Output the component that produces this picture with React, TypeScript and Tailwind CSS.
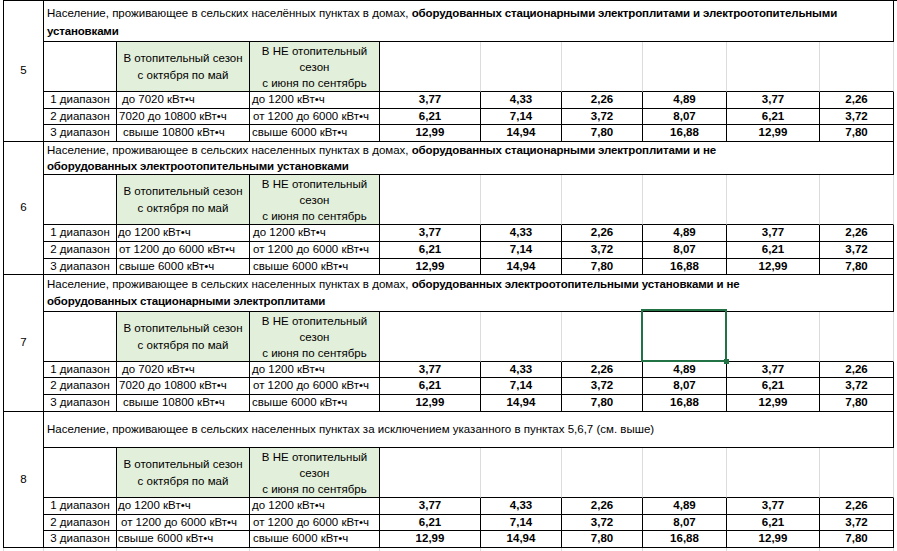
import type { ReactNode } from "react";

// Excel-like tariff sheet fragment (sections 5–8)

const COLS =
  "grid grid-cols-[40px_73px_133px_130px_101px_81px_81px_84px_93px_74px]";

const VALUES = [
  ["3,77", "4,33", "2,26", "4,89", "3,77", "2,26"],
  ["6,21", "7,14", "3,72", "8,07", "6,21", "3,72"],
  ["12,99", "14,94", "7,80", "16,88", "12,99", "7,80"],
];

const RANGES = ["1 диапазон", "2 диапазон", "3 диапазон"];

type Cell = { text: string; pad: string };

type SectionData = {
  num: string;
  titleH: string;
  title: ReactNode;
  rowHs: string[];
  c: Cell[];
  d: Cell[];
  selected?: boolean;
};

const SECTIONS: SectionData[] = [
  {
    num: "5",
    titleH: "h-[41px] pt-[2px] leading-[18px]",
    title: (
      <>
        Население, проживающее в сельских населённых пунктах в домах,{" "}
        <b className="tracking-[-0.15px]">
          оборудованных стационарными электроплитами и электроотопительными
          установками
        </b>
      </>
    ),
    rowHs: ["h-[17px]", "h-[16px]", "h-[17px]"],
    c: [
      { text: "до 7020 кВт•ч", pad: "pl-[5px]" },
      { text: "7020 до 10800 кВт•ч", pad: "pl-[2px]" },
      { text: "свыше 10800 кВт•ч", pad: "pl-[6px]" },
    ],
    d: [
      { text: "до 1200 кВт•ч", pad: "pl-[2px]" },
      { text: "от 1200 до 6000 кВт•ч", pad: "pl-[3px]" },
      { text: "свыше 6000 кВт•ч", pad: "pl-[2px]" },
    ],
  },
  {
    num: "6",
    titleH: "h-[33px] leading-[16px]",
    title: (
      <>
        Население, проживающее в сельских населенных пунктах в домах,{" "}
        <b className="tracking-[-0.15px]">
          оборудованных стационарными электроплитами и не
        </b>
        <br />
        <b className="tracking-[-0.15px]">
          оборудованных электроотопительными установками
        </b>
      </>
    ),
    rowHs: ["h-[17px]", "h-[17px]", "h-[16px]"],
    c: [
      { text: "до 1200 кВт•ч", pad: "pl-[1px]" },
      { text: "от 1200 до 6000 кВт•ч", pad: "pl-[2px]" },
      { text: "свыше 6000 кВт•ч", pad: "pl-[2px]" },
    ],
    d: [
      { text: "до 1200 кВт•ч", pad: "pl-[3px]" },
      { text: "от 1200 до 6000 кВт•ч", pad: "pl-[3px]" },
      { text: "свыше 6000 кВт•ч", pad: "pl-[3px]" },
    ],
  },
  {
    num: "7",
    titleH: "h-[37px] leading-[17px]",
    title: (
      <>
        Население, проживающее в сельских населенных пунктах в домах,{" "}
        <b className="tracking-[-0.15px]">
          оборудованных электроотопительными установками и не
        </b>
        <br />
        <b className="tracking-[-0.15px]">
          оборудованных стационарными электроплитами
        </b>
      </>
    ),
    rowHs: ["h-[16px]", "h-[17px]", "h-[17px]"],
    c: [
      { text: "до 7020 кВт•ч", pad: "pl-[5px]" },
      { text: "7020 до 10800 кВт•ч", pad: "pl-[2px]" },
      { text: "свыше 10800 кВт•ч", pad: "pl-[6px]" },
    ],
    d: [
      { text: "до 1200 кВт•ч", pad: "pl-[2px]" },
      { text: "от 1200 до 6000 кВт•ч", pad: "pl-[3px]" },
      { text: "свыше 6000 кВт•ч", pad: "pl-[2px]" },
    ],
    selected: true,
  },
  {
    num: "8",
    titleH: "h-[36px] leading-[17px]",
    title: (
      <>
        Население, проживающее в сельских населенных пунктах за исключением
        указанного в пунктах 5,6,7 (см. выше)
      </>
    ),
    rowHs: ["h-[17px]", "h-[16px]", "h-[17px]"],
    c: [
      { text: "до 1200 кВт•ч", pad: "pl-[1px]" },
      { text: "от 1200 до 6000 кВт•ч", pad: "pl-[4px]" },
      { text: "свыше 6000 кВт•ч", pad: "pl-[1px]" },
    ],
    d: [
      { text: "до 1200 кВт•ч", pad: "pl-[2px]" },
      { text: "от 1200 до 6000 кВт•ч", pad: "pl-[3px]" },
      { text: "свыше 6000 кВт•ч", pad: "pl-[3px]" },
    ],
  },
];

const Section = ({ s, first }: { s: SectionData; first: boolean }) => {
  return (
    <div
      className={`${COLS} border-l border-black ${
        first ? "border-t" : ""
      }`}
    >
      {/* номер пункта */}
      <div className="row-span-5 flex items-center justify-center border-r border-b border-black">
        {s.num}
      </div>

      {/* заголовок */}
      <div
        className={`col-span-9 ${s.titleH} flex flex-col justify-center overflow-hidden border-r border-b border-black pl-[3px]`}
      >
        <div>{s.title}</div>
      </div>

      {/* шапка */}
      <div className="h-[50px] border-r border-b border-black" />
      <div className="flex h-[50px] items-center justify-center overflow-hidden border-r border-b border-black bg-[#e2efda] text-center leading-[17px]">
        В отопительный сезон
        <br />с октября по май
      </div>
      <div className="flex h-[50px] items-center justify-center overflow-hidden border-r border-b border-black bg-[#e2efda] text-center leading-[16px]">
        В НЕ отопительный
        <br />
        сезон
        <br />с июня по сентябрь
      </div>
      {[0, 1, 2, 3, 4, 5].map((i) => (
        <div
          key={i}
          className="relative h-[50px] border-r border-b border-r-[#dcdcdc] border-b-black"
        >
          {s.selected && i === 3 && (
            <div className="absolute -top-[3px] -right-[1px] -bottom-[1px] -left-[2px] z-10 border-2 border-[#217346]">
              <div className="absolute -right-[4px] -bottom-[4px] h-[5px] w-[5px] bg-[#217346]" />
            </div>
          )}
        </div>
      ))}

      {/* диапазоны */}
      {RANGES.map((r, ri) => (
        <div key={r} className="contents">
          <div
            className={`${s.rowHs[ri]} flex items-center justify-center border-r border-b border-black leading-none`}
          >
            {r}
          </div>
          <div
            className={`${s.rowHs[ri]} flex items-center border-r border-b border-black whitespace-nowrap leading-none ${s.c[ri].pad}`}
          >
            {s.c[ri].text}
          </div>
          <div
            className={`${s.rowHs[ri]} flex items-center border-r border-b border-black whitespace-nowrap leading-none ${s.d[ri].pad}`}
          >
            {s.d[ri].text}
          </div>
          {VALUES[ri].map((v, vi) => (
            <div
              key={vi}
              className={`${s.rowHs[ri]} flex items-center justify-center border-r border-b border-black font-bold leading-none`}
            >
              {v}
            </div>
          ))}
        </div>
      ))}
    </div>
  );
};

export default function App() {
  return (
    <div className="h-[551px] w-[897px] overflow-hidden bg-white pl-[3px] font-['Liberation_Sans',Arial,sans-serif] text-[11.5px] text-black">
      {SECTIONS.map((s, i) => (
        <Section key={s.num} s={s} first={i === 0} />
      ))}
      {/* пустые ячейки листа ниже таблицы */}
      <div className={`${COLS} border-l border-[#dcdcdc]`}>
        {[0, 1, 2, 3, 4, 5, 6, 7, 8, 9].map((i) => (
          <div key={i} className="h-[8px] border-r border-[#dcdcdc]" />
        ))}
      </div>
    </div>
  );
}
